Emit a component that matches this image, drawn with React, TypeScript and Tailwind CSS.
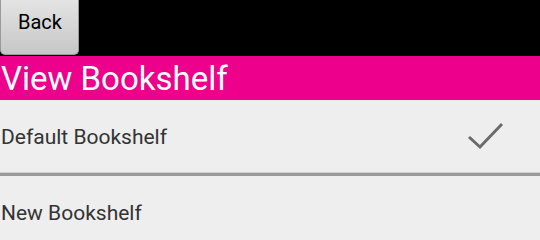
import React from 'react';

const Check: React.FC = () => (
    <svg width="40" height="30" viewBox="0 0 40 30" className="block">
        <path d="M3 16 L14 26 L36 3" fill="none" stroke="#6b6b6b" strokeWidth="3" />
    </svg>
);

const App: React.FC = () => {
    const shelves = [
        { name: 'Default Bookshelf', selected: true },
        { name: 'New Bookshelf', selected: false },
    ];

    return (
        <div className="w-[540px] h-[240px] overflow-hidden bg-[#eeeeee] font-['Roboto',sans-serif]">
            <div className="h-[56px] bg-black flex items-start">
                <button className="w-[79px] h-[55px] rounded-b-[5px] border border-[#9a9a9a] border-t-0 bg-gradient-to-b from-[#e4e4e4] to-[#c6c6c6] text-[20px] text-black leading-none pb-[10px] pl-[1px]">
                    Back
                </button>
            </div>
            <div className="h-[44px] bg-[#ec008c] flex items-center">
                <h1 className="text-[33px] leading-none text-white pl-[1px] pt-[1px]">View Bookshelf</h1>
            </div>
            <div className="flex flex-col">
                {shelves.map((s, i) => (
                    <div key={i} className="flex flex-col">
                        <div className="h-[72px] flex items-center justify-between pr-[34px]">
                            <span className="text-[21px] text-[#333333] pl-[1px] pt-[3px]">{s.name}</span>
                            {s.selected && <Check />}
                        </div>
                        {i === 0 && (
                            <div className="h-[4px] border-t border-[#cfcfcf] bg-[#999999]" />
                        )}
                    </div>
                ))}
            </div>
        </div>
    );
};

export default App;
